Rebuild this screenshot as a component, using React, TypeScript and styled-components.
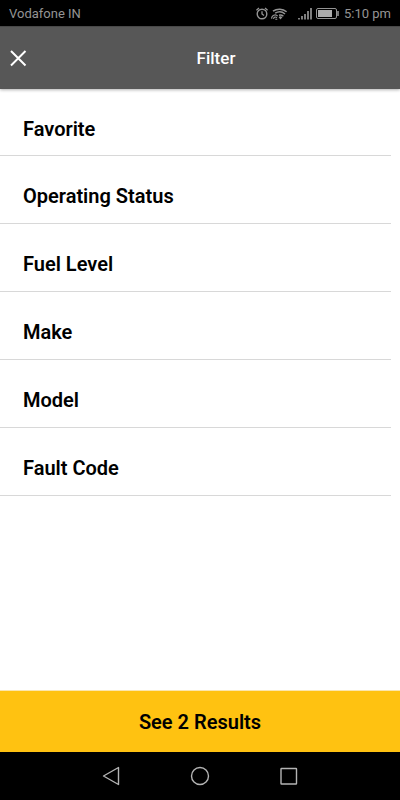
import React from "react";
import styled, { createGlobalStyle } from "styled-components";

const GlobalStyle = createGlobalStyle`
  *, *::before, *::after { box-sizing: border-box; }
  body { margin: 0; background: #fff; font-family: Roboto, sans-serif; }
  button { border: 0; padding: 0; background: none; color: inherit; font: inherit; cursor: pointer; }
  svg { display: block; }
`;

const Screen = styled.div`
  display: flex;
  flex-direction: column;
  min-height: 100vh;
`;

const StatusBar = styled.div`
  display: flex;
  align-items: center;
  justify-content: space-between;
  height: 26px;
  padding: 2px 9px 0;
  background: #000;
  color: #949494;
  font-size: 13px;
  line-height: 16px;
`;

const StatusIcons = styled.div`
  display: flex;
  align-items: center;
`;

const Clock = styled.time`
  margin-left: 4px;
`;

const Header = styled.header`
  display: grid;
  grid-template-columns: 32px 1fr;
  align-items: center;
  height: 63px;
  background: #575757;
  border-top: 1px solid #484848;
  box-shadow: 0 1px 3px rgba(0, 0, 0, 0.3);
  color: #fff;
`;

const CloseButton = styled.button`
  display: flex;
  justify-content: flex-end;
  padding: 4px 5px 4px 0;
`;

const Title = styled.h1`
  margin: 0;
  font-size: 17px;
  font-weight: 500;
  line-height: 20px;
  text-align: center;
`;

const FilterList = styled.ul`
  flex: 1;
  margin: 0;
  padding: 0 9px 0 0;
  list-style: none;
`;

const FilterRow = styled.li`
  border-bottom: 1px solid #d8d8d8;

  &:first-child button { height: 66px; }
`;

const FilterButton = styled.button`
  display: flex;
  align-items: center;
  width: 100%;
  height: 67px;
  padding: 13px 23px 0;
  font-size: 20px;
  font-weight: 600;
  line-height: 24px;
  color: #000;
`;

const ResultsButton = styled.button`
  height: 62px;
  border-top: 1px solid #fbe6ad;
  background: #ffc211;
  color: #000;
  font-size: 20px;
  font-weight: 600;
  line-height: 24px;
`;

const NavBar = styled.nav`
  display: flex;
  align-items: center;
  justify-content: center;
  gap: 64px;
  height: 48px;
  background: #000;
  color: #b4b4b4;
`;

const filters = ["Favorite", "Operating Status", "Fuel Level", "Make", "Model", "Fault Code"];

const StatusGlyphs = () => (
  <svg width="84" height="16" viewBox="0 0 84 16" fill="none" stroke="#949494" aria-hidden="true">
    <circle cx="6" cy="8" r="4.8" strokeWidth="1.4" />
    <path d="M6 5.2V8l2 1.6M.4 4.3l2.6-2.2M11.6 4.3 9 2.1" strokeWidth="1.3" />
    <path d="M17 5.2a11 11 0 0 1 13.6.6M19.2 7.2a8.4 8.4 0 0 1 9.8.8M23 9.2a5 5 0 0 1 4.4 1.1" strokeWidth="1.5" />
    <path d="m22.6 11 1.8 2.4 2-2.2a3 3 0 0 0-3.800-.2Z" fill="#949494" stroke="none" />
    <path d="M15.700 12.800a3.400 3.400 0 0 1 6-2.600M17.600 13a1.700 1.700 0 0 1 3.200-1M19.300 13.200h2" strokeWidth="1.1" />
    <path d="M43 13.500V12M46 13.500v-3.500M49 13.500V8M52 13.500V5M55 13.500V2" strokeWidth="1.7" />
    <rect x="60.500" y="2.500" width="20" height="10" rx="1.500" />
    <path d="M62 4h14v7H62Z" fill="#adadad" stroke="none" />
    <path d="M82 5v5" strokeWidth="1.6" />
  </svg>
);

export default function App() {
  return (
    <Screen>
      <GlobalStyle />
      <StatusBar>
        <span>Vodafone IN</span>
        <StatusIcons>
          <StatusGlyphs />
          <Clock>5:10 pm</Clock>
        </StatusIcons>
      </StatusBar>
      <Header>
        <CloseButton aria-label="Close">
          <svg width="18" height="18" viewBox="0 0 18 18" fill="none" stroke="currentColor" strokeWidth="2">
            <path d="m2 2 14.5 14.5M16.5 2 2 16.5" />
          </svg>
        </CloseButton>
        <Title>Filter</Title>
      </Header>
      <FilterList>
        {filters.map((name) => (
          <FilterRow key={name}>
            <FilterButton>{name}</FilterButton>
          </FilterRow>
        ))}
      </FilterList>
      <ResultsButton>See 2 Results</ResultsButton>
      <NavBar>
        <button aria-label="Back">
          <svg width="24" height="24" viewBox="0 0 24 24" fill="none" stroke="currentColor" strokeWidth="1.4" strokeLinejoin="round">
            <path d="M18.5 3.5v17L3.500 12Z" />
          </svg>
        </button>
        <button aria-label="Home">
          <svg width="24" height="24" viewBox="0 0 24 24" fill="none" stroke="currentColor" strokeWidth="1.4">
            <circle cx="12" cy="12" r="8.5" />
          </svg>
        </button>
        <button aria-label="Recent apps">
          <svg width="24" height="24" viewBox="0 0 24 24" fill="none" stroke="currentColor" strokeWidth="1.4">
            <rect x="5" y="4.5" width="15.5" height="15.5" rx=".5" />
          </svg>
        </button>
      </NavBar>
    </Screen>
  );
}
